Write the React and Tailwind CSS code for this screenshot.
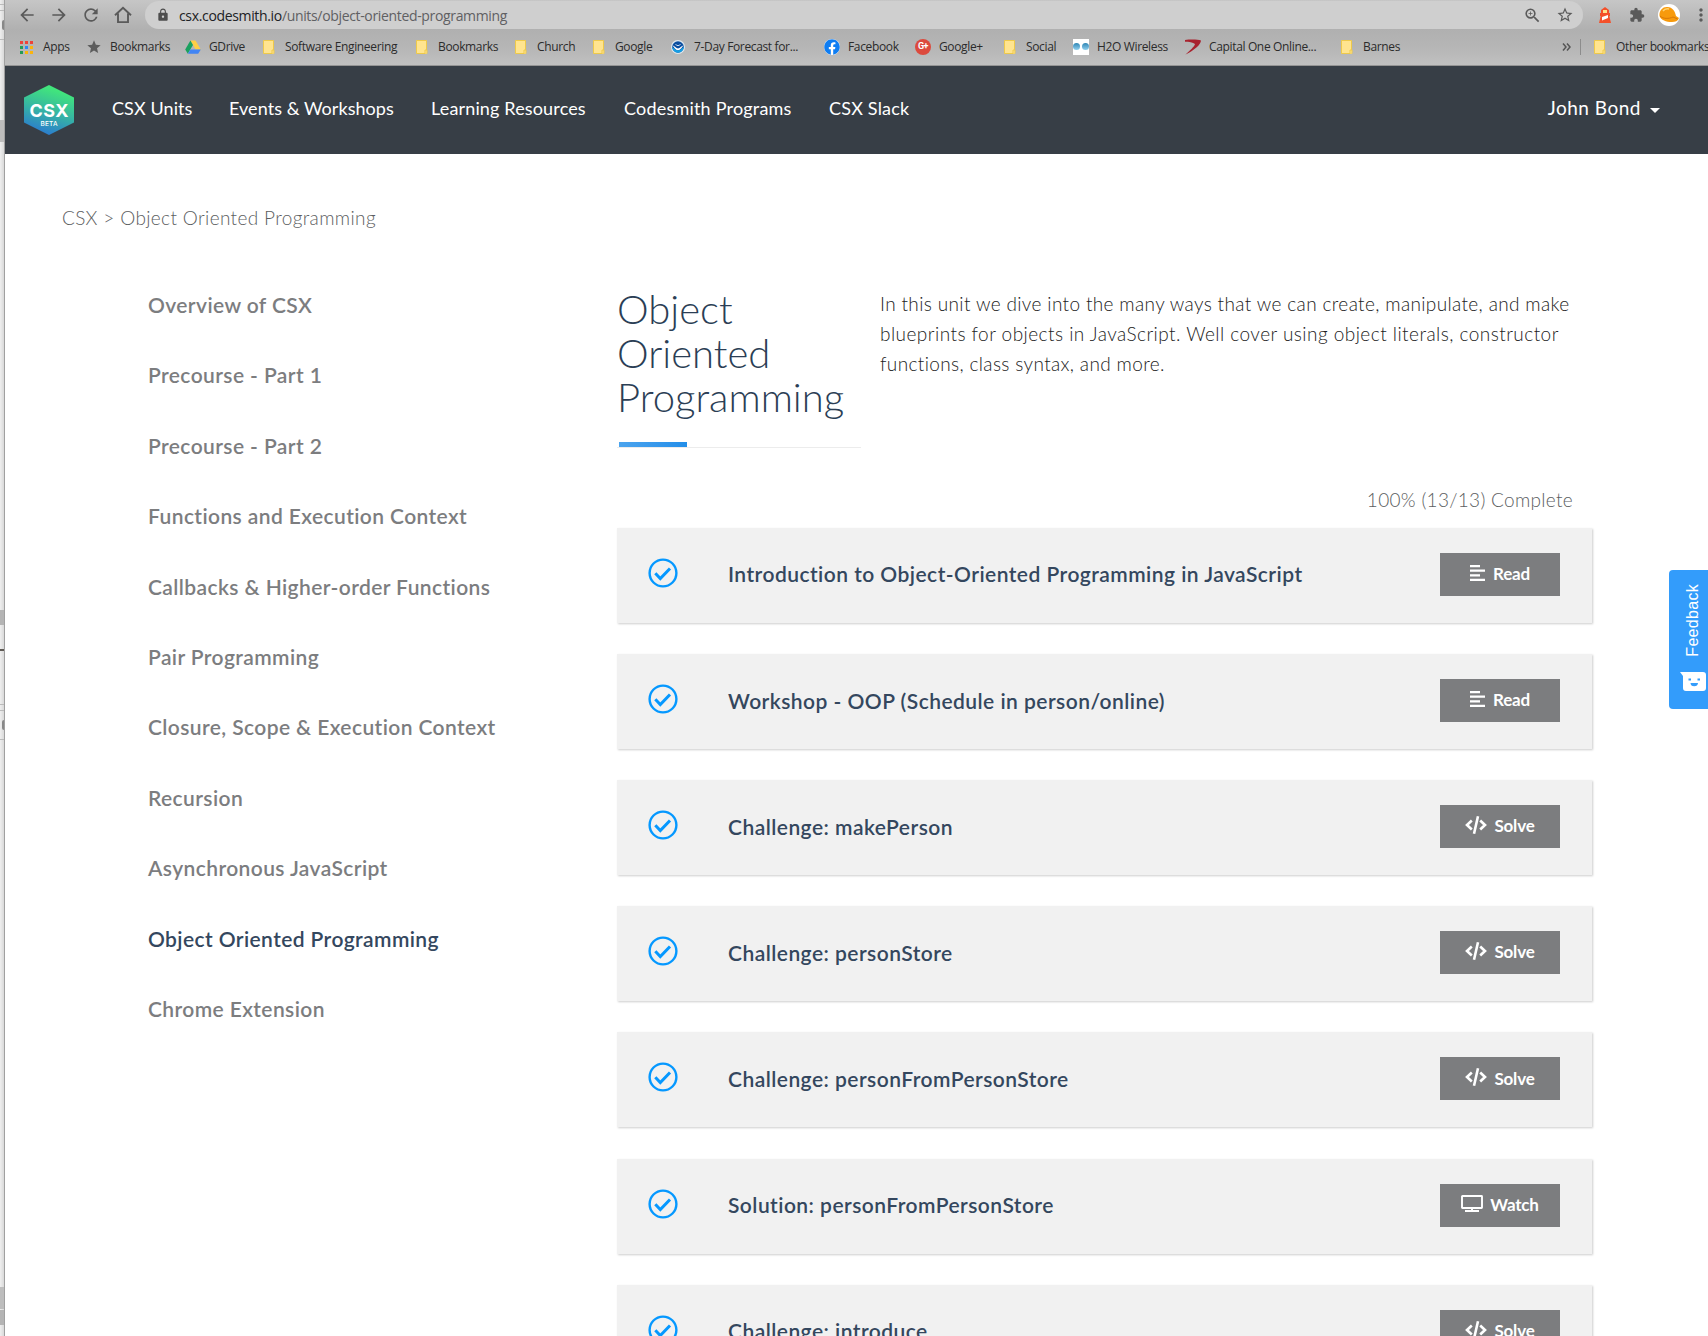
import { FaFacebook } from "react-icons/fa";
import { MdLock, MdStar, MdStarBorder, MdExtension, MdZoomIn, MdRefresh, MdArrowBack, MdArrowForward, MdMoreVert } from "react-icons/md";

const FolderIcon = () => (
  <svg viewBox="0 0 16 16" className="size-4">
    <path d="M2.500 1.500h10v13h-10z" fill="#ffe48f" stroke="#eec94a" />
    <path d="M11 14.500v-3.500h2v3.500" fill="#ffe48f" stroke="#eec94a" />
  </svg>
);

const AppsIcon = () => (
  <div className="-ml-px grid w-[13px] grid-cols-3 gap-[2px]">
    {["bg-[#ee4238]", "bg-[#ee4238]", "bg-[#ee4238]", "bg-[#249b55]", "bg-[#2f86f6]", "bg-[#fbb40c]", "bg-[#249b55]", "bg-[#fbb40c]", "bg-[#fbb40c]"].map((c, i) => (
      <span key={i} className={`h-[3px] w-[3px] ${c}`} />
    ))}
  </div>
);

const DriveIcon = () => (
  <svg viewBox="0 0 16 16" className="size-4">
    <path d="M5.400 1.500h5.100l5.300 9h-5.200z" fill="#ffcf45" />
    <path d="M5.400 1.500 8 6 2.800 14.800.2 10.400z" fill="#1aa15f" />
    <path d="M5.500 10.500h10.300l-2.600 4.300H2.900z" fill="#4285f4" />
  </svg>
);

const ForecastIcon = () => (
  <svg viewBox="0 0 16 16" className="size-4">
    <circle cx="8" cy="8" r="7" fill="#dfe9f0" />
    <circle cx="8" cy="8" r="5.800" fill="#0a4ea0" />
    <path d="M2.200 8C4 9 6 11.500 8 11.500s4-2.500 5.800-3.500a5.800 5.800 0 0 1-11.600 0z" fill="#12a0e6" />
    <path d="M2.500 6.500c2 .3 3.500 3 5.500 3s3.500-2.700 5.500-3c-1.500 1.500-3 4.700-5.500 4.700S4 8 2.500 6.500z" fill="#fff" />
    <path d="M5.500 5.500c1 .2 1.500 1.200 2.500 1.200s1.500-1 2.500-1.200" fill="none" stroke="#fff" strokeWidth="0.800" />
  </svg>
);

const FacebookIcon = () => (
  <span className="rounded-full bg-white">
    <FaFacebook className="size-4 text-[#0f7df2]" />
  </span>
);

const GooglePlusIcon = () => (
  <span className="flex size-4 items-center justify-center rounded-full bg-[#dc4a3d] font-['Roboto',sans-serif] text-[9px] font-bold tracking-tighter text-white">
    G+
  </span>
);

const WaterIcon = () => (
  <span className="flex h-4 w-4 justify-between bg-white pt-1">
    <span className="h-[7px] w-[7px] rounded-full bg-gradient-to-b from-[#2d86b4] to-[#8fd0ee]" />
    <span className="h-[7px] w-[7px] rounded-full bg-gradient-to-b from-[#2d86b4] to-[#8fd0ee]" />
  </span>
);

const CapitalIcon = () => (
  <svg viewBox="0 0 16 16" className="size-4">
    <path d="M0 1C5 .3 13 .3 16 1.500c0 4-7 10-15.500 14C5 11.500 9.500 7.500 10 5 8 3.300 4 2.800 0 2.800z" fill="#a8222e" />
  </svg>
);

const bookmarks = [
  ["Apps", AppsIcon, "w-[67px]"],
  ["Bookmarks", () => <MdStar className="size-4 text-[#5c5c5c]" />, "w-[99px]"],
  ["GDrive", DriveIcon, "w-[76px]"],
  ["Software Engineering", FolderIcon, "w-[153px]"],
  ["Bookmarks", FolderIcon, "w-[99px]"],
  ["Church", FolderIcon, "w-[78px]"],
  ["Google", FolderIcon, "w-[79px]"],
  ["7-Day Forecast for...", ForecastIcon, "w-[154px]"],
  ["Facebook", FacebookIcon, "w-[91px]"],
  ["Google+", GooglePlusIcon, "w-[87px]"],
  ["Social", FolderIcon, "w-[71px]"],
  ["H2O Wireless", WaterIcon, "w-[112px]"],
  ["Capital One Online...", CapitalIcon, "w-[154px]"],
  ["Barnes", FolderIcon, "w-[223px]"],
];

function BrowserBar() {
  return (
    <div className="h-[66px] shrink-0 border-b border-[#949494] bg-[linear-gradient(#c6c6c6_0px,#b0b0b0_30px,#b6b6b6_48px,#c0c0c0_65px)] font-['Open_Sans','Noto_Sans',sans-serif] text-[#5a5a5a]">
      <div className="flex h-[30px] items-center pl-[12px]">
        <div className="flex w-[128px] items-center gap-[12px]">
          <MdArrowBack className="size-5" />
          <MdArrowForward className="size-5" />
          <MdRefresh className="size-5" />
          <svg viewBox="0 0 20 20" className="size-5" fill="none" stroke="currentColor" strokeWidth="1.900">
            <path d="M2 10.300 10 2.800l8 7.500M5 8.500v8.600h10V8.500" />
          </svg>
        </div>
        <div className="flex h-[28px] w-[1438px] items-center rounded-full bg-[#cfcfcf] pr-[9px] pl-[11px]">
          <MdLock className="size-[14px] text-[#4d4d4d]" />
          <span className="ml-[9px] text-[14px] tracking-[-0.34px] text-[#5f6063]">
            <span className="text-[#202124]">csx.codesmith.io</span>/units/object-oriented-programming
          </span>
          <MdZoomIn className="ml-auto size-[19px]" />
          <MdStarBorder className="ml-[14px] size-[18px]" />
        </div>
        <div className="ml-[16px] flex items-center">
          <svg viewBox="0 0 12 16" className="h-4 w-3">
            <path d="M6 0 10 3v3h1v3h-.7L12 16H0l1.700-7H1V6h1V3z" fill="#f4502a" />
            <rect x="4" y="3" width="4" height="3" fill="#ffe08a" />
            <path d="m3 10 6-2v3l-6 2.500z" fill="#fff" />
          </svg>
          <MdExtension className="ml-[18px] size-4" />
          <svg viewBox="0 0 22 22" className="ml-[13px] size-[22px]">
            <circle cx="11" cy="11" r="11" fill="#fff" />
            <path d="M1.500 12C1 6 5 2.500 9.500 3c5 .4 7.500 4 8.500 9l3 2c-1 3-4 4-7 4C8 18 3 16 1.500 12z" fill="#f79a0c" />
            <path d="M2 12c3 3 9 3 13 1l4.500 2" fill="none" stroke="#d97706" />
            <path d="M5 7c1.500-2 4-2.500 6-2" fill="none" stroke="#ffd271" strokeWidth="1.500" />
          </svg>
          <MdMoreVert className="-mr-4 ml-[11px] size-5" />
        </div>
      </div>
      <div className="flex h-[34px] items-center pl-[14px] text-[12px] tracking-[-0.35px] whitespace-nowrap text-[#2b2b2b]">
        {bookmarks.map(([label, Icon, width], i) => (
          <div key={i} className={`flex shrink-0 items-center gap-2 ${width}`}>
            <span className="flex w-4 shrink-0 items-center justify-center"><Icon /></span>
            {label}
          </div>
        ))}
        <svg viewBox="0 0 9 8" className="h-2 w-[9px] shrink-0" fill="none" stroke="#555" strokeWidth="1.500">
          <path d="M1 .5 4 4 1 7.500M5 .5 8 4 5 7.500" />
        </svg>
        <span className="ml-[9px] h-4 w-px shrink-0 bg-[#8c8c8c]" />
        <span className="mr-2 ml-[11px] shrink-0"><FolderIcon /></span>
        <span className="shrink-0 tracking-[-0.35px]">Other bookmarks</span>
      </div>
    </div>
  );
}

const Logo = () => (
  <svg viewBox="0 0 50 50" className="size-[50px] shrink-0">
    <defs>
      <linearGradient id="hex" x1="0.65" y1="0" x2="0.35" y2="1">
        <stop offset="0.1" stopColor="#41e57c" />
        <stop offset="0.5" stopColor="#37b8a0" />
        <stop offset="1" stopColor="#2a78d2" />
      </linearGradient>
    </defs>
    <path d="M25 0 50 12.500v25L25 50 0 37.500v-25z" fill="url(#hex)" />
    <text x="25" y="32" textAnchor="middle" fill="#fff" fontFamily="Inter, sans-serif" fontWeight="700" fontSize="18" textLength="39">CSX</text>
    <text x="25" y="41" textAnchor="middle" fill="#fff" fontFamily="Inter, sans-serif" fontWeight="500" fontSize="6.500" textLength="17">BETA</text>
  </svg>
);

function NavBar() {
  return (
    <nav className="flex h-[88px] shrink-0 items-center bg-[#373e46] pr-[48px] pl-[19px] text-[18px] whitespace-nowrap text-white">
      <Logo />
      <div className="-mt-[4px] flex flex-1 items-center">
        <a className="ml-[38px] w-[117px] tracking-[0.1px]">CSX Units</a>
        <a className="w-[202px] tracking-[0.05px]">Events &amp; Workshops</a>
        <a className="w-[193px] tracking-[0.150px]">Learning Resources</a>
        <a className="w-[205px] tracking-[0.2px]">Codesmith Programs</a>
        <a className="tracking-[0.2px]">CSX Slack</a>
        <a className="ml-auto flex items-center gap-[9px] text-[19px] tracking-[0.5px]">
          John Bond
          <svg viewBox="0 0 10 5" className="mt-[5px] h-[5px] w-[10px]"><path d="M0 0h10L5 5z" fill="#fff" /></svg>
        </a>
      </div>
    </nav>
  );
}

const units = [
  "Overview of CSX",
  "Precourse - Part 1",
  "Precourse - Part 2",
  "Functions and Execution Context",
  "Callbacks & Higher-order Functions",
  "Pair Programming",
  "Closure, Scope & Execution Context",
  "Recursion",
  "Asynchronous JavaScript",
  "Object Oriented Programming",
  "Chrome Extension",
];

const ReadIcon = () => (
  <svg viewBox="0 0 15 16" className="mr-[8px] h-4 w-[15px]" fill="#fff">
    <path d="M0 0h10v2.200H0zM0 4.600h15v2.200H0zM0 9.200h10v2.200H0zM0 13.800h15V16H0z" />
  </svg>
);
const SolveIcon = () => (
  <svg viewBox="0 0 22 18" className="mr-[7px] h-[18px] w-[22px]" fill="none" stroke="#fff" strokeWidth="2.600">
    <path d="M6.800 4.500 2 9l4.800 4.500M15.200 4.500 20 9l-4.800 4.500M13 .3 9 17.700" />
  </svg>
);
const WatchIcon = () => (
  <svg viewBox="0 0 22 17" className="mr-[7px] h-[17px] w-[22px]" fill="none" stroke="#fff" strokeWidth="1.900">
    <rect x="1" y="1" width="20" height="12" rx="0.500" />
    <path d="M4 16h14M11 13v3" />
  </svg>
);

const actions = { Read: ReadIcon, Solve: SolveIcon, Watch: WatchIcon };

const lessons = [
  ["Introduction to Object-Oriented Programming in JavaScript", "Read"],
  ["Workshop - OOP (Schedule in person/online)", "Read"],
  ["Challenge: makePerson", "Solve"],
  ["Challenge: personStore", "Solve"],
  ["Challenge: personFromPersonStore", "Solve"],
  ["Solution: personFromPersonStore", "Watch"],
  ["Challenge: introduce", "Solve"],
];

function Lesson({ title, action }) {
  const Icon = actions[action];
  return (
    <div className="flex h-[95px] shrink-0 items-center bg-[#f1f1f1] pr-[32px] pl-[31px] shadow-[1px_1px_2px_rgba(0,0,0,0.2)]">
      <svg viewBox="0 0 30 30" className="-mt-[5px] size-[30px]" fill="none" stroke="#0598ff">
        <circle cx="15" cy="15" r="13.400" strokeWidth="2.400" />
        <path d="m7.300 15.300 5 5.200 9.700-10" strokeWidth="3" />
      </svg>
      <span className="-mt-[2px] ml-[50px] text-[21px] font-semibold tracking-[0.460px] whitespace-nowrap text-[#34475e]">{title}</span>
      <button className="-mt-[2px] ml-auto flex h-[43px] w-[120px] items-center justify-center bg-[#7c7d7f] text-[17px] font-bold text-white">
        <span className="-mt-[3px]"><Icon /></span>
        <span className="-mt-px tracking-[-0.2px]">{action}</span>
      </button>
    </div>
  );
}

function WindowEdge() {
  return (
    <div className="flex w-[5px] shrink-0 flex-col border-r border-[#a0a0a0] bg-[linear-gradient(to_right,#efefef,#d9d9d9)]">
      <div className="mt-[4px] h-px bg-[#bbb]" />
      <div className="mt-[5px] h-px bg-[#bbb]" />
      <div className="mt-[9px] ml-[2px] h-[10px] w-[2px] rounded-l-full bg-[#888]" />
      <div className="mt-[9px] h-px bg-[#bbb]" />
      <div className="mt-[80px] h-[22px] bg-[#bdbdbd]" />
      <div className="mt-[468px] h-[15px] bg-[#b4b4b4]" />
      <div className="mt-[24px] h-[2px] bg-[#5f5a55]" />
      <div className="mt-[53px] h-px bg-[#bbb]" />
      <div className="mt-[5px] h-px bg-[#bbb]" />
      <div className="mt-[9px] ml-[2px] h-[10px] w-[2px] rounded-l-full bg-[#888]" />
      <div className="mt-[9px] h-px bg-[#bbb]" />
      <div className="mt-[547px] h-[22px] bg-[#bdbdbd]" />
      <div className="mt-px h-[15px] bg-[#b4b4b4]" />
    </div>
  );
}

export default function App() {
  return (
    <div className="relative flex h-[1336px] w-[1708px] overflow-hidden bg-white font-['Lato','Open_Sans',sans-serif]">
      <WindowEdge />
      <div className="flex min-w-0 flex-1 flex-col overflow-hidden">
        <BrowserBar />
        <NavBar />
        <main className="flex shrink-0 flex-col">
          <div className="mt-[49px] ml-[57px] h-[30px] text-[19px] leading-[30px] font-light tracking-[0.36px] text-[#5c5e61]">
            CSX &gt; Object Oriented Programming
          </div>
          <div className="mt-[55px] flex">
            <ul className="ml-[143px] flex w-[469px] flex-col gap-[40.400px] pt-[2px] text-[21px] leading-[30px] font-semibold tracking-[0.4px] text-[#7c7d7f]">
              {units.map((u) => (
                <li key={u} className={u === "Object Oriented Programming" ? "text-[#34475e]" : ""}>{u}</li>
              ))}
            </ul>
            <section className="flex w-[975px] flex-col">
              <div className="flex">
                <div className="h-[160px] w-[244px] border-b border-[#ececec] pl-[2px]">
                  <h1 className="-mt-px -ml-[2px] h-[155px] text-[40px] leading-[44px] font-light text-[#2b3e55]">
                    Object<br />Oriented<br />Programming
                  </h1>
                  <div className="h-[5px] w-[68px] bg-gradient-to-r from-[#4ba4ee] to-[#218ee9]" />
                </div>
                <p className="ml-[19px] pt-px text-[19px] leading-[30px] font-light tracking-[0.36px] whitespace-nowrap text-[#222]">
                  In this unit we dive into the many ways that we can create, manipulate, and make
                  <br />
                  <span className="tracking-[0.46px]">
                    blueprints for objects in JavaScript. Well cover using object literals, constructor
                  </span>
                  <br />
                  functions, class syntax, and more.
                </p>
              </div>
              <div className="mt-[37px] mb-[12.600px] pr-[19px] text-right text-[19px] leading-[30px] font-light tracking-[0.3px] text-[#5c5e61]">
                100% (13/13) Complete
              </div>
              <div className="flex flex-col gap-[31.200px]">
                {lessons.map(([title, action]) => (
                  <Lesson key={title} title={title} action={action} />
                ))}
              </div>
            </section>
          </div>
        </main>
      </div>
      <div className="absolute top-[570px] right-0 flex h-[139px] w-[39px] flex-col items-center rounded-l bg-[#339cfb] pt-[14px] pl-[9px] text-white">
        <span className="rotate-180 font-['Liberation_Sans',sans-serif] text-[16px] leading-[20px] tracking-[0.3px] [writing-mode:vertical-rl]">Feedback</span>
        <svg viewBox="0 0 26 19" className="mt-[15px] -ml-px h-[19px] w-[26px] shrink-0">
          <path d="M0 0h23a3 3 0 0 1 3 3v13a3 3 0 0 1-3 3H6a3 3 0 0 1-3-3V4z" fill="#fff" />
          <path d="M8.500 6.500h2.500v2H8.500zM17.500 6.500H20v2h-2.500zM10.500 11h7.500c0 2-1.500 3.300-3.800 3.300S10.500 13 10.500 11z" fill="#339cfb" />
        </svg>
      </div>
    </div>
  );
}
